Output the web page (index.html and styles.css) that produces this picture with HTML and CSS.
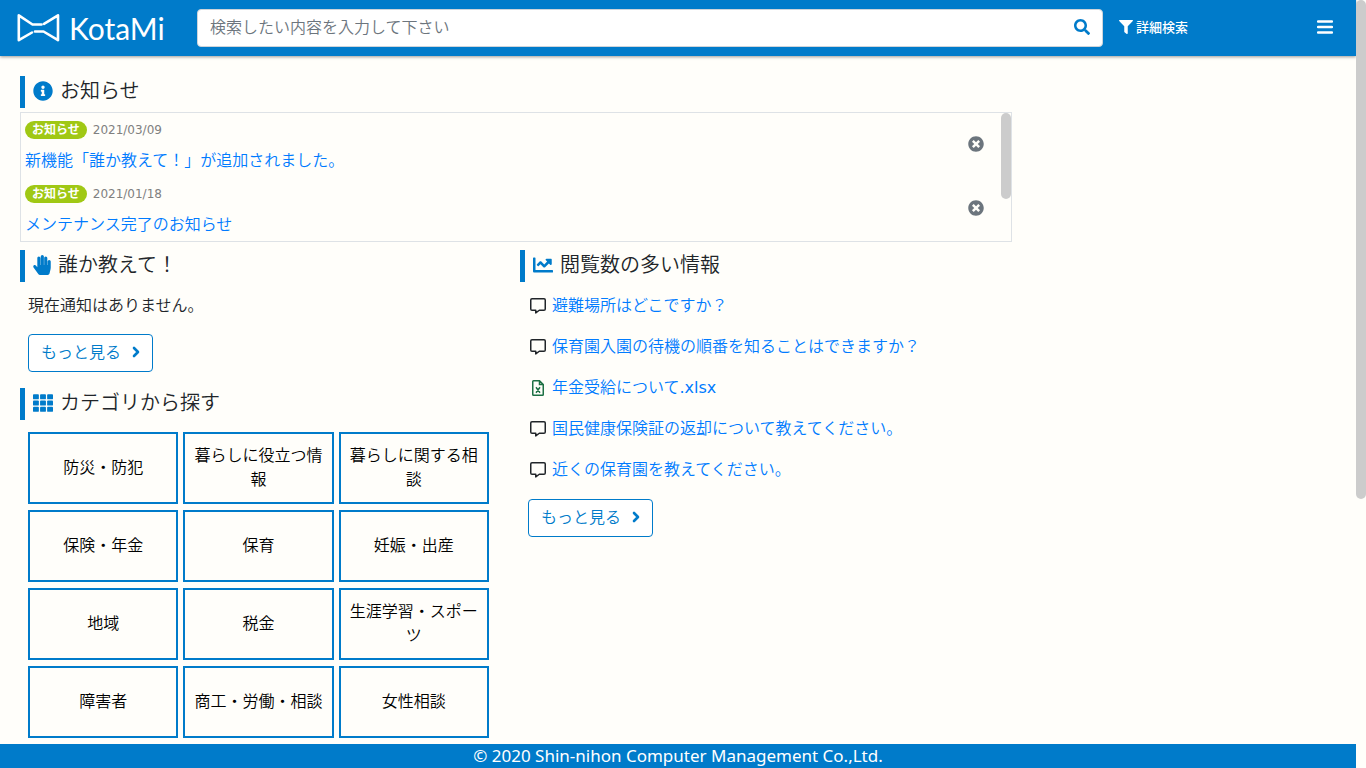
FILE: index.html
```html
<!DOCTYPE html>
<html lang="ja">
<head>
<meta charset="utf-8">
<title>KotaMi</title>
<link rel="stylesheet" href="styles.css">
</head>
<body>
<svg class="sprite" aria-hidden="true">
  <symbol id="info" viewBox="0 0 512 512"><path d="M256 8C119.043 8 8 119.083 8 256c0 136.997 111.043 248 248 248s248-111.003 248-248C504 119.083 392.957 8 256 8zm0 110c23.196 0 42 18.804 42 42s-18.804 42-42 42-42-18.804-42-42 18.804-42 42-42zm56 254c0 6.627-5.373 12-12 12h-88c-6.627 0-12-5.373-12-12v-24c0-6.627 5.373-12 12-12h12v-64h-12c-6.627 0-12-5.373-12-12v-24c0-6.627 5.373-12 12-12h64c6.627 0 12 5.373 12 12v100h12c6.627 0 12 5.373 12 12v24z"/></symbol>
  <symbol id="times" viewBox="0 0 512 512"><path d="M256 8C119 8 8 119 8 256s111 248 248 248 248-111 248-248S393 8 256 8zm121.6 313.1c4.7 4.7 4.7 12.3 0 17L338 377.6c-4.7 4.7-12.3 4.7-17 0L256 312l-65.1 65.6c-4.7 4.7-12.3 4.7-17 0L134.4 338c-4.7-4.7-4.7-12.3 0-17l65.6-65-65.6-65.1c-4.7-4.7-4.7-12.3 0-17l39.6-39.6c4.7-4.7 12.3-4.7 17 0l65 65.7 65.1-65.6c4.7-4.7 12.3-4.7 17 0l39.6 39.6c4.7 4.7 4.7 12.3 0 17L312 256l65.6 65.1z"/></symbol>
  <symbol id="search" viewBox="0 0 512 512"><path d="M505 442.7L405.3 343c-4.5-4.5-10.6-7-17-7H372c27.6-35.3 44-79.7 44-128C416 93.1 322.9 0 208 0S0 93.1 0 208s93.1 208 208 208c48.3 0 92.7-16.4 128-44v16.3c0 6.4 2.5 12.5 7 17l99.7 99.7c9.4 9.4 24.6 9.4 33.9 0l28.3-28.3c9.4-9.4 9.4-24.6.1-34zM208 336c-70.7 0-128-57.2-128-128 0-70.7 57.2-128 128-128 70.7 0 128 57.2 128 128 0 70.7-57.2 128-128 128z"/></symbol>
  <symbol id="filter" viewBox="0 0 512 512"><path d="M487.976 0H24.028C2.71 0-8.047 25.866 7.058 40.971L192 225.941V432c0 7.831 3.821 15.17 10.237 19.662l80 55.98C298.02 518.69 320 507.493 320 487.98V225.941l184.947-184.97C520.021 25.896 509.338 0 487.976 0z"/></symbol>
  <symbol id="hand" viewBox="0 0 448 512"><path d="M408.781 128.007C386.356 127.578 368 146.36 368 168.79V256h-8V79.79c0-22.43-18.356-41.212-40.781-40.783C297.488 39.423 280 57.169 280 79v177h-8V40.79C272 18.36 253.644-.422 231.219.007 209.488.423 192 18.169 192 40v216h-8V80.79c0-22.43-18.356-41.212-40.781-40.783C121.488 40.423 104 58.169 104 80v235.992l-31.648-43.519c-12.993-17.866-38.009-21.817-55.877-8.823-17.865 12.994-21.815 38.01-8.822 55.877l125.601 172.705A48 48 0 0 0 172.073 512h197.59c22.274 0 41.622-15.324 46.724-37.006l26.508-112.66a192.011 192.011 0 0 0 5.104-43.975V168c.001-21.831-17.487-39.577-39.218-39.993z"/></symbol>
  <symbol id="chart" viewBox="0 0 512 512"><path d="M496 384H64V80c0-8.84-7.16-16-16-16H16C7.16 64 0 71.16 0 80v336c0 17.67 14.33 32 32 32h464c8.84 0 16-7.16 16-16v-32c0-8.84-7.16-16-16-16zM464 96H345.94c-21.38 0-32.09 25.85-16.97 40.97l32.4 32.4L288 242.75l-73.37-73.37c-12.5-12.5-32.76-12.5-45.25 0l-68.69 68.69c-6.25 6.25-6.25 16.38 0 22.63l22.62 22.62c6.25 6.25 16.38 6.25 22.63 0L192 237.25l73.37 73.37c12.5 12.5 32.76 12.5 45.25 0l96-96 32.4 32.4c15.12 15.12 40.97 4.41 40.97-16.97V112c.01-8.84-7.15-16-15.99-16z"/></symbol>
  <symbol id="tiles" viewBox="0 0 512 512"><g><rect x="0" y="32" width="150" height="128" rx="22"/><rect x="181" y="32" width="150" height="128" rx="22"/><rect x="362" y="32" width="150" height="128" rx="22"/><rect x="0" y="192" width="150" height="128" rx="22"/><rect x="181" y="192" width="150" height="128" rx="22"/><rect x="362" y="192" width="150" height="128" rx="22"/><rect x="0" y="352" width="150" height="128" rx="22"/><rect x="181" y="352" width="150" height="128" rx="22"/><rect x="362" y="352" width="150" height="128" rx="22"/></g></symbol>
  <symbol id="comment" viewBox="0 0 16 16"><path d="M2 .75h12c.7 0 1.25.55 1.25 1.25v9c0 .7-.55 1.25-1.25 1.25H9.3L5.75 14.9v-2.65H2c-.7 0-1.25-.55-1.25-1.25V2C.75 1.3 1.3.75 2 .75z" fill="none" stroke="currentColor" stroke-width="1.5" stroke-linejoin="round"/></symbol>
  <symbol id="excel" viewBox="0 0 12 16"><path d="M1.5.75h6l3.75 3.75v10c0 .4-.3.75-.75.75h-9c-.4 0-.75-.35-.75-.75v-13c0-.4.3-.75.75-.75zM7.5.75V4.5h3.75M4 7.3l4 5.4M8 7.3l-4 5.4" fill="none" stroke="currentColor" stroke-width="1.5"/></symbol>
  <symbol id="angle" viewBox="0 0 8 12"><path d="M2 2l4 4-4 4" fill="none" stroke="currentColor" stroke-width="2.6" stroke-linecap="round" stroke-linejoin="round"/></symbol>
  <symbol id="bars" viewBox="0 0 16 16"><path d="M1 2.5h14M1 8h14M1 13.5h14" fill="none" stroke="currentColor" stroke-width="2.4" stroke-linecap="round"/></symbol>
</svg>
<div class="app">
  <div class="page">
    <header class="topbar">
      <a class="brand" href="#">
        <svg class="brand-mark" viewBox="0 0 44 30" fill="none" stroke="currentColor" stroke-width="2.6" stroke-linejoin="round" stroke-linecap="round"><path d="M25.5 11.5H16.5L2.8 2.3V27.2L16 19.5M19 18.5h8.5L42 27.2V2.3L28 10.8"/></svg>
        <span>KotaMi</span>
      </a>
      <form class="search" role="search">
        <input class="search-input" type="text" aria-label="検索" placeholder="検索したい内容を入力して下さい">
        <button class="search-button" type="button" aria-label="検索する"><svg class="icon"><use href="#search"/></svg></button>
      </form>
      <div class="tools">
        <a class="advanced" href="#"><svg class="icon-small"><use href="#filter"/></svg>詳細検索</a>
        <button class="menu" type="button" aria-label="メニュー"><svg class="icon"><use href="#bars"/></svg></button>
      </div>
    </header>
    <main class="content">
      <section class="notices">
        <h2 class="heading"><svg class="icon-head"><use href="#info"/></svg>お知らせ</h2>
        <div class="notice-box">
          <ul class="notice-list">
            <li class="notice">
              <div class="notice-text">
                <div class="notice-meta"><span class="badge">お知らせ</span><time>2021/03/09</time></div>
                <a href="#">新機能「誰か教えて！」が追加されました。</a>
              </div>
              <button class="dismiss" type="button" aria-label="閉じる"><svg class="icon"><use href="#times"/></svg></button>
            </li>
            <li class="notice">
              <div class="notice-text">
                <div class="notice-meta"><span class="badge">お知らせ</span><time>2021/01/18</time></div>
                <a href="#">メンテナンス完了のお知らせ</a>
              </div>
              <button class="dismiss" type="button" aria-label="閉じる"><svg class="icon"><use href="#times"/></svg></button>
            </li>
          </ul>
          <div class="track"><div class="thumb thumb-notices"></div></div>
        </div>
      </section>
      <div class="columns">
        <div>
          <section>
            <h2 class="heading"><svg class="icon-hand"><use href="#hand"/></svg>誰か教えて！</h2>
            <div class="inset">
              <p class="empty">現在通知はありません。</p>
              <button class="more" type="button">もっと見る<svg class="icon-angle"><use href="#angle"/></svg></button>
            </div>
          </section>
          <section class="categories">
            <h2 class="heading"><svg class="icon-head"><use href="#tiles"/></svg>カテゴリから探す</h2>
            <div class="category-grid">
              <button class="category" type="button">防災・防犯</button>
              <button class="category" type="button">暮らしに役立つ情報</button>
              <button class="category" type="button">暮らしに関する相談</button>
              <button class="category" type="button">保険・年金</button>
              <button class="category" type="button">保育</button>
              <button class="category" type="button">妊娠・出産</button>
              <button class="category" type="button">地域</button>
              <button class="category" type="button">税金</button>
              <button class="category" type="button">生涯学習・スポーツ</button>
              <button class="category" type="button">障害者</button>
              <button class="category" type="button">商工・労働・相談</button>
              <button class="category" type="button">女性相談</button>
            </div>
          </section>
        </div>
        <section>
          <h2 class="heading"><svg class="icon-head"><use href="#chart"/></svg>閲覧数の多い情報</h2>
          <div class="inset">
            <ul class="popular">
              <li><svg class="icon"><use href="#comment"/></svg><a href="#">避難場所はどこですか？</a></li>
              <li><svg class="icon"><use href="#comment"/></svg><a href="#">保育園入園の待機の順番を知ることはできますか？</a></li>
              <li><svg class="icon excel"><use href="#excel"/></svg><a href="#">年金受給について<span class="extension">.xlsx</span></a></li>
              <li><svg class="icon"><use href="#comment"/></svg><a href="#">国民健康保険証の返却について教えてください。</a></li>
              <li><svg class="icon"><use href="#comment"/></svg><a href="#">近くの保育園を教えてください。</a></li>
            </ul>
            <button class="more" type="button">もっと見る<svg class="icon-angle"><use href="#angle"/></svg></button>
          </div>
        </section>
      </div>
    </main>
    <footer class="footer">© 2020 Shin-nihon Computer Management Co.,Ltd.</footer>
  </div>
  <div class="track"><div class="thumb thumb-page"></div></div>
</div>
</body>
</html>
```
FILE: styles.css
```css
* { box-sizing: border-box; }

body {
  margin: 0;
  background: #fffefa;
  color: #212529;
  font: 350 16px/24px "Noto Sans", "Noto Sans CJK JP", sans-serif;
}

h2, p, ul { margin: 0; padding: 0; }
ul { list-style: none; }
a { color: #007bff; text-decoration: none; }
svg { display: block; flex: none; fill: currentColor; }
button, input { font: inherit; }
button { background: none; border: 0; padding: 0; cursor: pointer; }

.sprite { position: absolute; width: 0; height: 0; }
.icon { width: 16px; height: 16px; }
.icon-small { width: 14px; height: 14px; }
.icon-head { width: 20px; height: 20px; }
.icon-hand { width: 18px; height: 20px; }
.icon-angle { width: 8px; height: 12px; }

.app { display: flex; height: 100vh; }
.page { flex: 1; min-width: 0; display: flex; flex-direction: column; }

.track { flex: none; width: 10px; }
.thumb { background: #ccc; border-radius: 5px; }
.thumb-page { height: 65%; }
.thumb-notices { height: 67%; }

.topbar {
  flex: none;
  display: flex;
  align-items: center;
  height: 56px;
  padding: 0 23px 0 16px;
  background: #007bca;
  color: #fff;
  box-shadow: 0 1px 3px rgba(0, 0, 0, 0.4);
}
.brand {
  flex: none;
  display: flex;
  align-items: center;
  gap: 9px;
  width: 181px;
  color: #fff;
  font: 400 30px/30px Lato, sans-serif;
}
.brand-mark { width: 44px; height: 30px; fill: none; }
.search {
  flex: 1;
  display: flex;
  align-items: center;
  height: 38px;
  background: #fff;
  border: 1px solid #ced4da;
  border-radius: 4px;
}
.search-input {
  flex: 1;
  min-width: 0;
  height: 36px;
  padding: 0 12px 2px;
  border: 0;
  background: none;
  outline: none;
}
.search-input::placeholder { color: #6c757d; opacity: 1; }
.search-button { padding: 9px 12px 11px; color: #007bca; }
.tools {
  flex: none;
  display: flex;
  align-items: center;
  justify-content: space-between;
  width: 230px;
  padding: 0 0 2px 16px;
}
.advanced {
  display: flex;
  align-items: center;
  gap: 3px;
  color: #fff;
  font-size: 13px;
  font-weight: 500;
}
.menu { color: #fff; }

.content {
  flex: 1;
  min-height: 0;
  overflow: hidden;
  width: 100%;
  max-width: 1040px;
  padding: 20px;
}
.heading {
  display: flex;
  align-items: center;
  gap: 7px;
  height: 32px;
  padding: 0 0 3px 8px;
  border-left: 5px solid #007bca;
  font-size: 20px;
  font-weight: 350;
}
.heading svg { color: #007bca; }

.notices { margin: 0 8px 8px 0; }
.notice-box {
  display: flex;
  margin-top: 4px;
  border: 1px solid #dee2e6;
}
.notice-list { flex: 1; }
.notice {
  display: flex;
  align-items: center;
  justify-content: space-between;
  padding: 5px 17px 5px 4px;
}
.notice-text { display: grid; gap: 6px; }
.notice-meta {
  display: flex;
  align-items: center;
  gap: 6px;
  color: #808080;
  font: 400 12px/24px "DejaVu Sans", sans-serif;
}
.badge {
  padding: 0 7px;
  border-radius: 9px;
  background: #a0c814;
  color: #fff;
  font: 700 12px/18px "Noto Sans", "Noto Sans CJK JP", sans-serif;
}
.dismiss { padding-bottom: 2px; color: #6c757d; }

.columns { display: grid; grid-template-columns: 1fr 1fr; }
.inset { padding-left: 8px; }
.empty { margin: 11px 0 17px; }
.more {
  display: flex;
  align-items: center;
  gap: 11px;
  height: 38px;
  padding: 0 12px 2px;
  border: 1px solid #007bca;
  border-radius: 4px;
  background: #fff;
  color: #007bca;
}
.categories { margin-top: 16px; }
.category-grid {
  display: grid;
  grid-template-columns: repeat(3, 1fr);
  gap: 6px 5px;
  margin: 12px 31px 0 8px;
}
.category {
  height: 72px;
  padding: 0 8px 2px;
  border: 2px solid #007bca;
  color: #000;
}
.popular { margin: 3px 0 9px; }
.popular li {
  display: flex;
  align-items: center;
  gap: 6px;
  padding: 8px 2px;
  line-height: 25px;
}
.popular .excel { color: #1d7044; }
.extension { font: 400 16px/24px "DejaVu Sans", sans-serif; }

.footer {
  flex: none;
  background: #007bca;
  color: #fff;
  font-size: 17px;
  font-weight: 400;
  line-height: 24px;
  text-align: center;
}
```
